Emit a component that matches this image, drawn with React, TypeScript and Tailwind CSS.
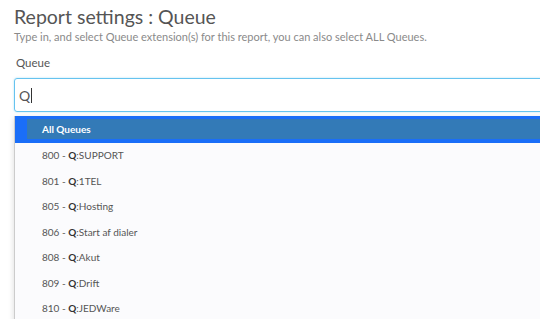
import React from "react";

const queues = [
  { ext: "800", name: "SUPPORT" },
  { ext: "801", name: "1TEL" },
  { ext: "805", name: "Hosting" },
  { ext: "806", name: "Start af dialer" },
  { ext: "808", name: "Akut" },
  { ext: "809", name: "Drift" },
  { ext: "810", name: "JEDWare" },
];

export default function App() {
  return (
    <div className="w-[540px] h-[319px] overflow-hidden bg-white font-['Lato',sans-serif]">
      <div className="pl-[14px] pt-[5px]">
        <h1 className="text-[19.5px] leading-[24px] text-[#555]">Report settings : Queue</h1>
        <p className="text-[11px] leading-[16px] text-[#8a8a8a]">
          Type in, and select Queue extension(s) for this report, you can also select ALL Queues.
        </p>
        <label className="block text-[11.5px] leading-[16px] text-[#555] mt-[10px] ml-[2px]">Queue</label>
        <div className="mt-[7px] w-[560px] h-[34px] border border-[#66c3ef] rounded-[3px] shadow-[0_0_2px_rgba(102,195,239,0.6)] flex items-center pl-[4px] text-[14px] text-[#555]">
          Q<span className="inline-block w-px h-[15px] bg-[#333] ml-px" />
        </div>
        <div className="mt-[4px] w-[560px] h-[220px] border-l border-[#ccc] bg-[#fbfbfd] shadow-[0_2px_6px_rgba(0,0,0,0.15)]">
          <div className="h-[27px] bg-[#1a6ef8] pt-[3px] pl-[12px]">
            <div className="h-[20px] bg-[#337ab7] pl-[15px] flex items-center text-[10px] font-bold text-white">
              All Queues
            </div>
          </div>
          {queues.map((q) => (
            <div key={q.ext} className="h-[25.5px] flex items-center pl-[27px] text-[10px] text-[#555]">
              <span>
                {q.ext} - <b className="font-bold text-[#333]">Q</b>:{q.name}
              </span>
            </div>
          ))}
        </div>
      </div>
    </div>
  );
}
